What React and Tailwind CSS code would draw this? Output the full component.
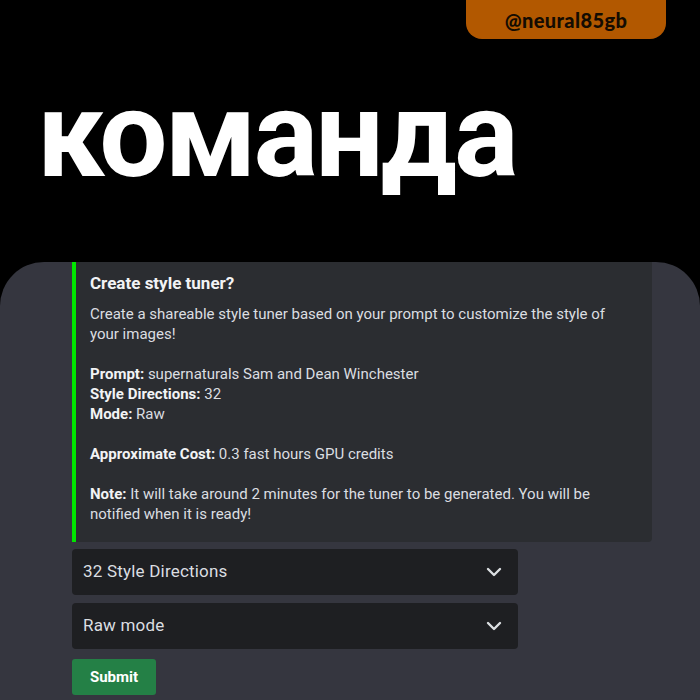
import React from 'react';

const Chevron = () => (
  <svg width="16" height="10" viewBox="0 0 16 10" fill="none">
    <path d="M2 2l6 6 6-6" stroke="#dbdee1" strokeWidth="2.4" strokeLinecap="round" strokeLinejoin="round" />
  </svg>
);

const Select = ({ label }) => (
  <div className="w-[446px] h-[46px] bg-[#1e1f22] rounded-[4px] flex items-center justify-between pl-[11px] pr-[16px]">
    <span className="text-[17px] tracking-[0.2px] text-[#dbdee1]">{label}</span>
    <Chevron />
  </div>
);

const Line = ({ label, children }) => (
  <div className="whitespace-nowrap">
    {label && <span className="font-bold text-[#f2f3f5]">{label} </span>}
    {children}
  </div>
);

export default function App() {
  return (
    <div className="w-[700px] h-[700px] bg-black flex flex-col overflow-hidden font-['Roboto',sans-serif]">
      {/* header */}
      <div className="h-[262px] flex flex-col">
        <div className="flex justify-end pr-[34px]">
          <div className="w-[200px] h-[39px] bg-[#b25800] rounded-b-[16px] flex items-center justify-center">
            <span className="font-['Lato',sans-serif] font-black text-[20px] text-[#140c02] tracking-[0.4px]">@neural85gb</span>
          </div>
        </div>
        <div className="pl-[37px] mt-[36px] font-['Roboto',sans-serif] font-bold text-white text-[121px] leading-none tracking-[-0.025em]">
          команда
        </div>
      </div>

      {/* discord panel */}
      <div className="flex-1 bg-[#35363f] rounded-t-[44px] pl-[72px]">
        <div className="w-[580px] bg-[#2b2d31] border-l-4 border-[#00e600] rounded-br-[4px] pl-[14px] pr-[16px] pt-[11px] pb-[18px]">
          <div className="text-[17px] leading-[20px] font-bold text-[#f2f3f5]">Create style tuner?</div>
          <div className="mt-[11px] text-[15px] leading-[20px] text-[#dbdee1]">
            <Line>Create a shareable style tuner based on your prompt to customize the style of</Line>
            <Line>your images!</Line>
            <div className="h-[20px]" />
            <Line label="Prompt:">supernaturals Sam and Dean Winchester</Line>
            <Line label="Style Directions:">32</Line>
            <Line label="Mode:">Raw</Line>
            <div className="h-[20px]" />
            <Line label="Approximate Cost:">0.3 fast hours GPU credits</Line>
            <div className="h-[20px]" />
            <Line label="Note:">It will take around 2 minutes for the tuner to be generated. You will be</Line>
            <Line>notified when it is ready!</Line>
          </div>
        </div>
        <div className="mt-[7px] flex flex-col gap-[8px]">
          <Select label="32 Style Directions" />
          <Select label="Raw mode" />
        </div>
        <button className="mt-[10px] w-[84px] h-[36px] bg-[#248046] rounded-[3px] text-white font-bold text-[15px]">
          Submit
        </button>
      </div>
    </div>
  );
}
